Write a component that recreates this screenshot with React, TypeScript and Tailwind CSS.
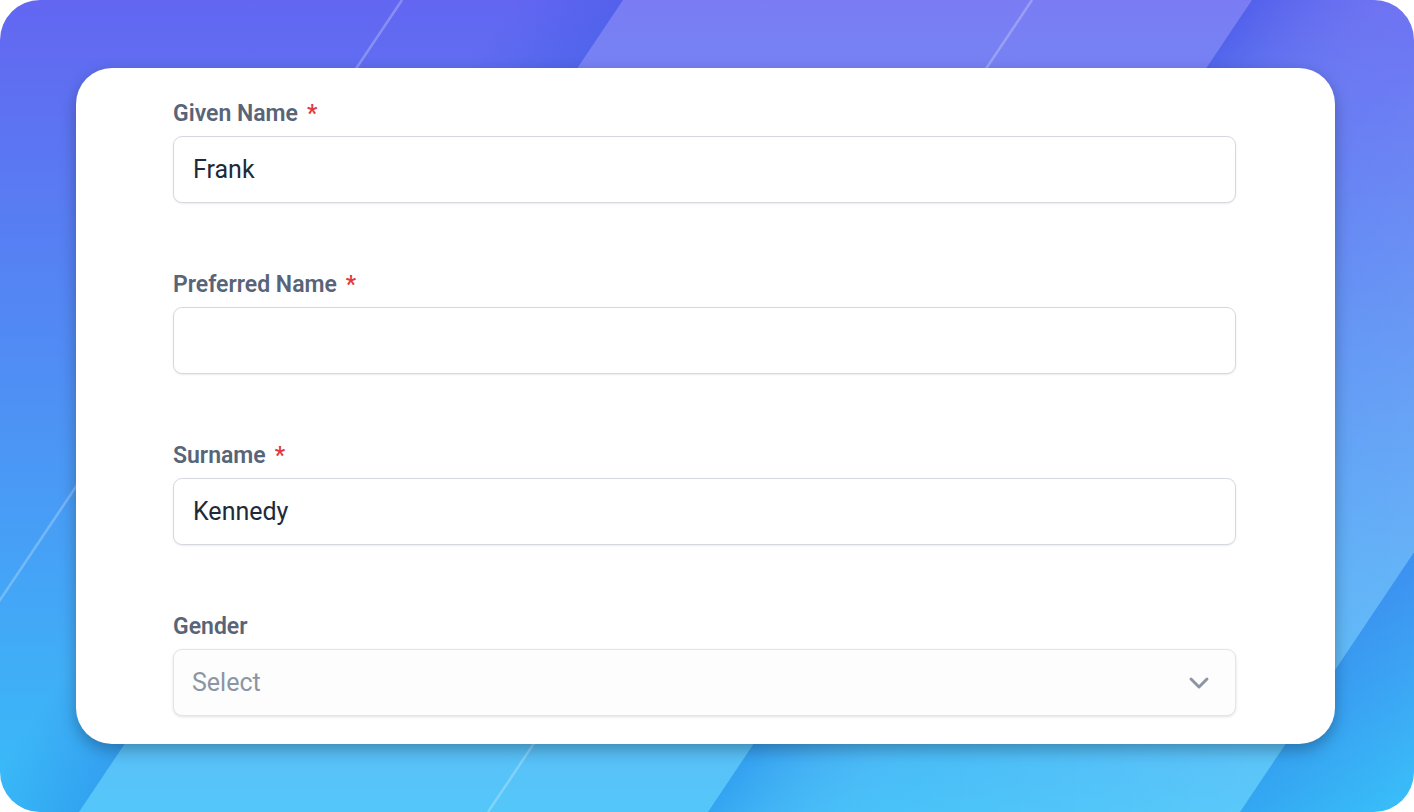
import { ChevronDown } from 'lucide-react'

type FieldProps = {
  label: string
  required?: boolean
  children: React.ReactNode
}

const Field = ({ label, required, children }: FieldProps) => (
  <div className="flex flex-col">
    <label className="mb-[7px] flex items-center gap-[9px] text-[23px] leading-[30px] font-semibold text-[#586477]">
      <span>{label}</span>
      {required && <span className="text-[#e0393e]">*</span>}
    </label>
    {children}
  </div>
)

const TextInput = ({ value }: { value: string }) => (
  <input
    readOnly
    value={value}
    className="h-[67px] w-full rounded-[9px] border border-[#d5d9df] bg-white px-[19px] text-[25px] text-[#1e2a3b] shadow-[0_1px_2px_rgba(0,0,0,0.08)] outline-none"
  />
)

const Backdrop = () => (
  <svg
    className="absolute inset-0 h-full w-full"
    viewBox="0 0 1414 812"
    preserveAspectRatio="none"
  >
    <defs>
      <linearGradient id="base" x1="0" y1="0" x2="0" y2="1">
        <stop offset="0" stopColor="#6366f1" />
        <stop offset="1" stopColor="#38bdf8" />
      </linearGradient>
      <linearGradient id="pane2" gradientUnits="userSpaceOnUse" x1="980" y1="406" x2="1340" y2="648">
        <stop offset="0" stopColor="#1d4ed8" stopOpacity="0.22" />
        <stop offset="0.35" stopColor="#ffffff" stopOpacity="0.08" />
        <stop offset="1" stopColor="#ffffff" stopOpacity="0.17" />
      </linearGradient>
      <linearGradient id="shadeRight" gradientUnits="userSpaceOnUse" x1="1326" y1="684" x2="1426" y2="751">
        <stop offset="0" stopColor="#1d4ed8" stopOpacity="0.2" />
        <stop offset="1" stopColor="#1d4ed8" stopOpacity="0" />
      </linearGradient>
      <linearGradient id="shadeLeft" gradientUnits="userSpaceOnUse" x1="100" y1="780" x2="25" y2="730">
        <stop offset="0" stopColor="#1d4ed8" stopOpacity="0.22" />
        <stop offset="1" stopColor="#1d4ed8" stopOpacity="0" />
      </linearGradient>
    </defs>
    <rect width="1414" height="812" fill="url(#base)" />
    <polygon points="-600,0 623,0 79,812 -600,812" fill="url(#shadeLeft)" />
    <polygon points="623,0 1252,0 708,812 79,812" fill="#ffffff" fillOpacity="0.15" />
    <polygon points="1252,0 1784,0 1240,812 708,812" fill="url(#pane2)" />
    <polygon points="1784,0 2400,0 2400,812 1240,812" fill="url(#shadeRight)" />
    <line x1="402" y1="0" x2="-142" y2="812" stroke="#ffffff" strokeOpacity="0.25" strokeWidth="2.5" />
    <line x1="1032" y1="0" x2="488" y2="812" stroke="#ffffff" strokeOpacity="0.25" strokeWidth="2.5" />
  </svg>
)

export default function App() {
  return (
    <div className="h-[812px] w-[1414px] bg-white" style={{ fontFamily: 'Roboto, "Liberation Sans", sans-serif' }}>
      <div className="relative h-full w-full overflow-hidden rounded-[40px] pt-[68px] pb-[68px] pl-[76px] pr-[79px]">
        <Backdrop />
        <div className="relative flex h-full flex-col gap-[67px] rounded-[36px] bg-white pt-[31px] pb-[28px] pl-[97px] pr-[99px] shadow-[0_6px_16px_rgba(0,0,0,0.28)]">
          <Field label="Given Name" required>
            <TextInput value="Frank" />
          </Field>
          <Field label="Preferred Name" required>
            <TextInput value="" />
          </Field>
          <Field label="Surname" required>
            <TextInput value="Kennedy" />
          </Field>
          <Field label="Gender">
            <button
              type="button"
              className="flex h-[67px] w-full items-center justify-between rounded-[9px] border border-[#e3e5e8] bg-[#fdfdfd] pl-[18px] pr-[20px] text-left shadow-[0_1px_3px_rgba(0,0,0,0.12)]"
            >
              <span className="text-[25px] text-[#8b95a3]">Select</span>
              <ChevronDown className="h-[32px] w-[32px] text-[#8b95a3]" strokeWidth={2.2} />
            </button>
          </Field>
        </div>
      </div>
    </div>
  )
}
